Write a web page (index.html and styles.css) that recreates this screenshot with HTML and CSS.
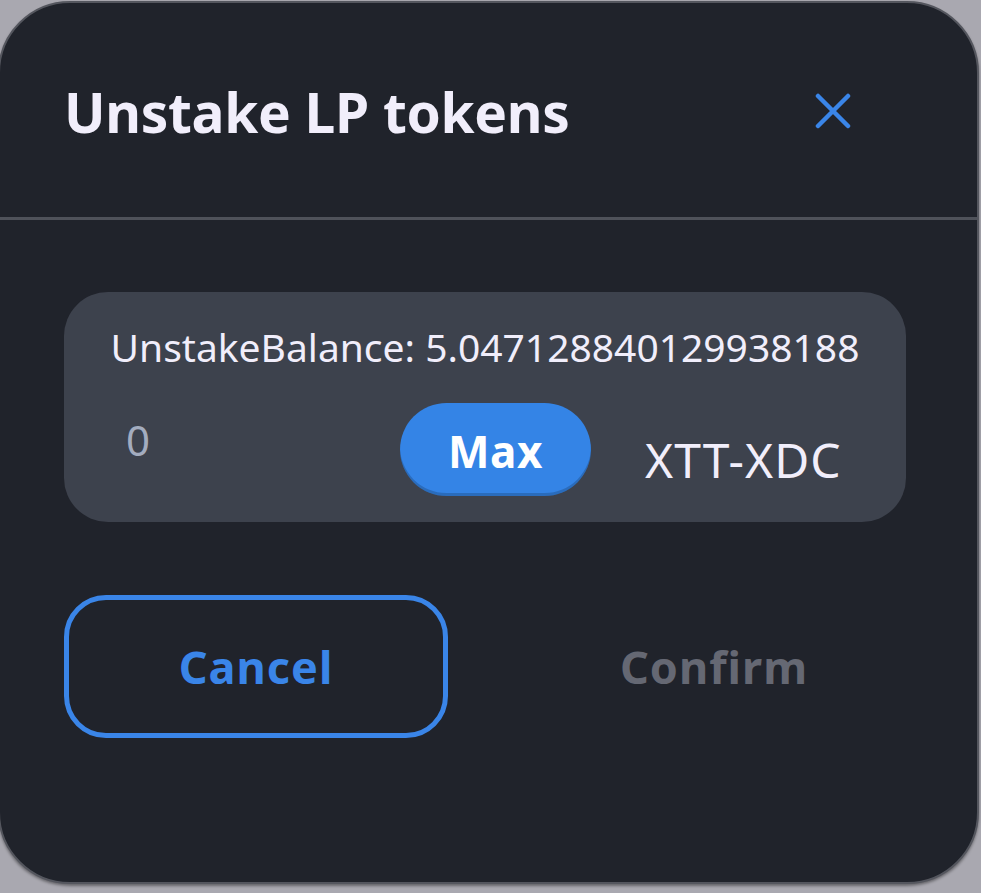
FILE: index.html
```html
<!DOCTYPE html>
<html>
<head>
<meta charset="utf-8">
<link rel="stylesheet" href="styles.css">
</head>
<body>
<div class="modal">
  <div class="header">
    <h2 class="title">Unstake LP tokens</h2>
    <button class="close" aria-label="Close">
      <svg width="36" height="36" viewBox="0 0 36 36"><path d="M3 3L33 33M33 3L3 33" stroke="#3a85e8" stroke-width="4.5" stroke-linecap="round" fill="none"/></svg>
    </button>
  </div>
  <div class="body">
    <div class="panel">
      <div class="balance">UnstakeBalance: 5.047128840129938188</div>
      <div class="row">
        <div class="amount">0</div>
        <button class="max">Max</button>
        <div class="symbol">XTT-XDC</div>
      </div>
    </div>
    <div class="actions">
      <button class="btn cancel">Cancel</button>
      <button class="btn confirm">Confirm</button>
    </div>
  </div>
</div>
</body>
</html>
```

FILE: styles.css
```css
* { box-sizing: border-box; }
html, body { margin: 0; padding: 0; }
body {
  background: #a9a8b0;
  width: 981px;
  height: 893px;
  overflow: hidden;
  font-family: "Noto Sans", "Open Sans", sans-serif;
}
.modal {
  width: 981px;
  height: 883px;
  margin: 1px 0 0 -2px;
  background: #20232b;
  border: 2px solid #54565e;
  border-radius: 72px;
  box-shadow: 0 2px 3px rgba(0,0,0,0.4);
}
.header {
  height: 217px;
  display: flex;
  align-items: center;
  justify-content: space-between;
  padding: 0 128px 0 64px;
  border-bottom: 3px solid #4f525a;
}
.title {
  margin: 0;
  color: #f1eefb;
  font-size: 55px;
  font-weight: 700;
  letter-spacing: -0.3px;
  padding-top: 2px;
}
.close {
  background: none;
  border: 0;
  padding: 0;
  width: 36px;
  height: 36px;
  margin-top: 2px;
  margin-right: -2px;
}
.close svg { display: block; }
.body {
  padding: 72px 71px 0 64px;
}
.panel {
  height: 230px;
  background: #3d424d;
  border-radius: 44px;
  padding: 28px 0 0 0;
}
.balance {
  text-align: center;
  color: #f1eefb;
  font-size: 39px;
  line-height: 54px;
}
.row {
  display: flex;
  align-items: center;
  margin-top: 29px;
  padding-left: 62px;
}
.amount {
  width: 274px;
  color: #a3acbf;
  font-size: 42px;
  margin-top: -20px;
}
.max {
  width: 191px;
  height: 93px;
  border: 0;
  border-radius: 47px;
  background: #3484e6;
  box-shadow: inset 0 -3px 0 rgba(0,0,0,0.18);
  color: #ffffff;
  font-family: inherit;
  font-size: 44px;
  font-weight: 700;
  padding: 2px 0 0;
  letter-spacing: 0.5px;
}
.symbol {
  margin-left: 54px;
  color: #f1eefb;
  font-size: 48px;
  letter-spacing: 1px;
  margin-top: 20px;
}
.actions {
  display: flex;
  justify-content: space-between;
  margin-top: 73px;
}
.btn {
  width: 384px;
  height: 143px;
  border-radius: 42px;
  font-family: inherit;
  font-size: 45px;
  font-weight: 700;
  letter-spacing: 1px;
  background: transparent;
  padding: 0;
}
.cancel {
  border: 5px solid #3a85e8;
  color: #3a85e8;
}
.confirm {
  border: 0;
  color: #656873;
}
```
